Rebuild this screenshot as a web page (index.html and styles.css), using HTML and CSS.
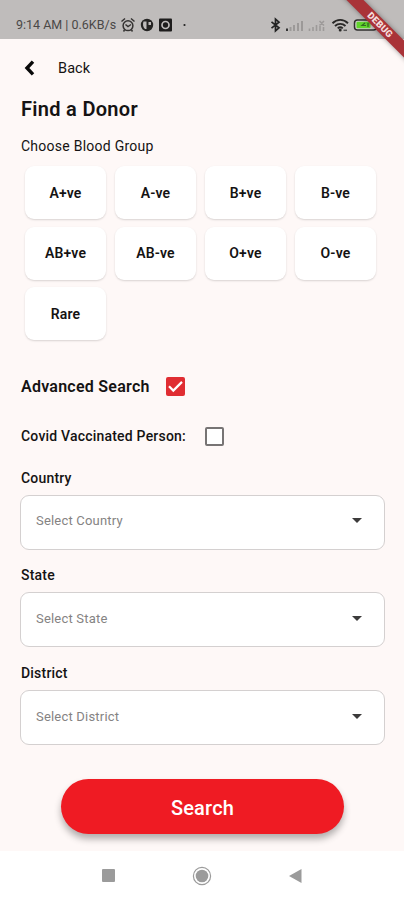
FILE: index.html
```html
<!DOCTYPE html>
<html lang="en">
<head>
<meta charset="utf-8">
<title>Find a Donor</title>
<link rel="stylesheet" href="styles.css">
</head>
<body>
<div class="screen">
  <header class="status">
    <span class="clock">9:14 AM | 0.6KB/s</span>
    <svg class="status-left" width="70" height="18" viewBox="0 0 70 18">
      <g fill="none" stroke="#353332" stroke-width="1.5">
        <circle cx="8" cy="9.700" r="4.900"/>
        <path d="M1.500 5.500l3.500-3M14.500 5.500l-3.500-3M5.500 8.500l2.500 2 3-2M4.500 14l-1 1.500M11.500 14l1 1.500"/>
      </g>
      <circle cx="27" cy="9" r="6.200" fill="#252423"/>
      <path d="M23.500 5.500h3v7.500h-1.500c-2-1.500-2.500-5-1.500-7.500zM28.500 6h2.500v3h-2.500z" fill="#bfbcbb"/>
      <rect x="39" y="2.500" width="13" height="13" rx="1" fill="#1e1d1d"/>
      <circle cx="45.500" cy="9" r="3.500" fill="none" stroke="#bfbcbb" stroke-width="1.700"/>
      <circle cx="64.500" cy="9" r="1.100" fill="#222"/>
    </svg>
    <svg class="status-right" width="114" height="18" viewBox="-2 0 114 18">
      <path d="M-.5 5.800l7.500 6-3.500 3V3.200l3.500 3-7.500 6" fill="none" stroke="#222" stroke-width="1.700"/>
      <path d="M15 12.500v2.500" stroke="#333" stroke-width="2"/>
      <path d="M18.500 11v4M22 9v6M26 7v8M30 5v10" stroke="#9c9998" stroke-width="2"/>
      <path d="M37.500 12.500v2.500M41 11v4M44.500 9v6M48 10v5M51.500 11v4M47.500 5l4.500 4.500M52 5l-4.500 4.500" stroke="#9d9a99" stroke-width="1.600"/>
      <g fill="none" stroke="#292827" stroke-width="1.900">
        <path d="M60.500 7.200c4.500-4.400 11-4.400 15.500 0M63 10c3-2.900 7.500-2.900 10.500 0M65.700 12.400c1.600-1.500 3.500-1.500 5.100 0"/>
      </g>
      <circle cx="68.200" cy="14" r="1.500" fill="#292827"/>
      <path d="M71.500 14.300h3.500" stroke="#555" stroke-width="1.500"/>
      <rect x="82.500" y="4" width="22" height="10" rx="3" fill="#d2d0ce" stroke="#302f2e" stroke-width="1.500"/>
      <rect x="84.500" y="5.700" width="14" height="6.600" rx="1" fill="#61d52c"/>
      <path d="M93 7l-3 2.500h4M96 7v4" fill="none" stroke="#326c22" stroke-width="1.200"/>
    </svg>
    <div class="ribbon">DEBUG</div>
  </header>
  <main class="page">
    <nav class="back">
      <svg width="11" height="16" viewBox="0 0 11 16"><path d="M9 1.700L3 8l6 6.300" fill="none" stroke="#090909" stroke-width="3.400"/></svg>
      <span>Back</span>
    </nav>
    <h1>Find a Donor</h1>
    <p class="choose">Choose Blood Group</p>
    <section class="groups">
      <button>A+ve</button><button>A-ve</button><button>B+ve</button><button>B-ve</button>
      <button>AB+ve</button><button>AB-ve</button><button>O+ve</button><button>O-ve</button>
      <button>Rare</button>
    </section>
    <div class="check advanced">
      <span>Advanced Search</span>
      <i class="box checked"><svg width="19" height="19" viewBox="0 0 19 19"><path d="M3 9.300l4.300 4.300L16 4.900" fill="none" stroke="#fff" stroke-width="2.200"/></svg></i>
    </div>
    <div class="check covid">
      <span>Covid Vaccinated Person:</span>
      <i class="box"></i>
    </div>
    <div class="field"><label>Country</label><div class="select"><span>Select Country</span><i class="arrow"></i></div></div>
    <div class="field"><label>State</label><div class="select"><span>Select State</span><i class="arrow"></i></div></div>
    <div class="field"><label>District</label><div class="select"><span>Select District</span><i class="arrow"></i></div></div>
    <button class="search">Search</button>
  </main>
  <footer class="keys">
    <svg width="13" height="13" viewBox="0 0 13 13"><rect width="13" height="13" rx="1" fill="#9b9b9b"/></svg>
    <svg width="20" height="20" viewBox="0 0 20 20"><circle cx="10" cy="10" r="8.600" fill="none" stroke="#9b9b9b" stroke-width="1.200"/><circle cx="10" cy="10" r="6.300" fill="#9b9b9b"/></svg>
    <svg width="13" height="14" viewBox="0 0 13 14"><path d="M12.500 0v14L0 7z" fill="#9b9b9b"/></svg>
  </footer>
</div>
</body>
</html>
```
FILE: styles.css
```css
* { box-sizing: border-box; }
body { margin: 0; font-family: Roboto, "Liberation Sans", sans-serif; color: #151313; }
.screen { width: 404px; height: 900px; display: flex; flex-direction: column; overflow: hidden; background: #fff; }
.status { position: relative; flex: none; height: 39px; background: #bfbcbb; display: flex; align-items: center; padding: 10px 20px 0 16px; }
.clock { width: 104px; font-size: 12.500px; letter-spacing: 0; color: #4a4847; white-space: nowrap; }
.status-left { flex: none; }
.status-right { flex: none; margin-left: auto; margin-right: 0; }
.ribbon { position: absolute; left: 330px; top: 19px; width: 100px; height: 12px; line-height: 12px; text-align: center; transform: rotate(45deg); background: #a93338; color: #f5dddd; font-size: 9.500px; font-weight: 900; letter-spacing: .2px; box-shadow: 0 0 5px rgba(0,0,0,.4); }
.page { flex: none; height: 812px; padding: 0 20px 0 21px; background: #fef8f7; display: flex; flex-direction: column; }
.back { height: 58px; display: flex; align-items: center; gap: 23px; padding-left: 3px; font-size: 14.500px; letter-spacing: .1px; }
h1 { margin: 0; height: 25px; line-height: 25px; font-size: 20px; font-weight: 600; letter-spacing: .3px; }
.choose { margin: 14px 0 0; height: 20px; line-height: 20px; font-size: 14px; letter-spacing: .25px; }
.groups { margin: 10px 0 0 4px; display: grid; grid-template-columns: repeat(4, 81px); grid-auto-rows: 53px; gap: 7.500px 9px; }
button { border: 0; padding: 0; font-family: inherit; }
.groups button { border-radius: 9px; background: #fff; box-shadow: 0 1px 2px rgba(0,0,0,.15); color: #151313; font-size: 14px; font-weight: 600; letter-spacing: .15px; }
.check { display: flex; align-items: center; height: 20px; }
.check span { white-space: nowrap; }
.advanced { margin-top: 36px; font-size: 16px; font-weight: 600; letter-spacing: .25px; }
.advanced span { width: 144.500px; }
.covid { margin-top: 30px; font-size: 14px; font-weight: 500; letter-spacing: .2px; }
.covid span { width: 183.500px; }
.box { width: 19px; height: 19px; border: 2px solid #777474; border-radius: 2px; background: #fff; }
.checked { border: 0; background: #e02d32; }
.box svg { display: block; }
.field { display: flex; flex-direction: column; margin-bottom: 18px; }
.covid + .field { margin-top: 23.500px; }
label { height: 20px; line-height: 20px; font-size: 14px; font-weight: 500; letter-spacing: .2px; margin-bottom: 7px; margin-top: -2px; }
.field + .field { margin-top: -0.200px; }
.select { height: 55px; margin-left: -1px; margin-right: -1px; border: 1px solid #d4d0d0; border-radius: 9px; background: #fff; display: flex; align-items: center; justify-content: space-between; padding: 0 22px 3px 15px; color: #858383; font-size: 13px; letter-spacing: .2px; }
.arrow { border: 5px solid transparent; border-top-color: #3c3b3b; border-bottom: 0; }
.search { width: 283px; height: 55px; flex: none; margin: 16px auto 0 40px; border-radius: 28px; background: #ef1b23; color: #fff; font-size: 20px; font-weight: 500; letter-spacing: .2px; padding-top: 2px; box-shadow: 0 5px 7px rgba(0,0,0,.3); }
.keys { height: 49px; display: flex; align-items: center; justify-content: space-between; padding: 0 102px; }
```
